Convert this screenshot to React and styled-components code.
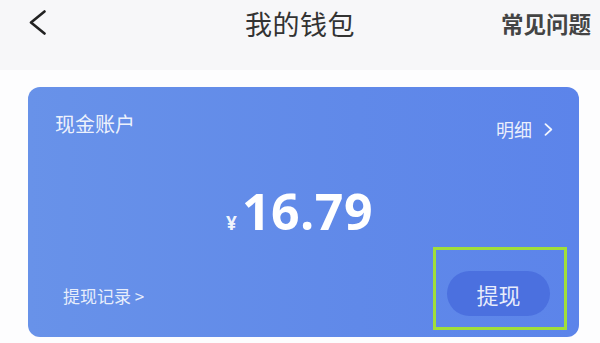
import React from "react";
import styled, { createGlobalStyle } from "styled-components";

const Global = createGlobalStyle`
  html, body { margin: 0; padding: 0; background: #fdfdfe; }
  body { width: 600px; height: 343px; overflow: hidden; font-family: "Noto Sans", "Noto Sans CJK SC", sans-serif; }
  * { box-sizing: border-box; }
`;

const Page = styled.div`
  width: 600px;
  height: 343px;
  display: flex;
  flex-direction: column;
`;

const Header = styled.header`
  height: 70px;
  flex: none;
  background: #f7f7f9;
  display: grid;
  grid-template-columns: 1fr auto 1fr;
  align-items: start;
  padding: 0 9px;
`;

const HeaderCell = styled.div`
  height: 46px;
  display: flex;
  align-items: center;
  justify-content: ${(p) => p.$justify || "flex-start"};
  padding-left: ${(p) => p.$indent || 0}px;
`;

const Title = styled.h1`
  margin: 0;
  font-family: "Noto Sans CJK SC", sans-serif;
  font-size: 27px;
  font-weight: 400;
  color: #333;
  letter-spacing: 0.5px;
`;

const HelpLink = styled.span`
  font-family: "Noto Sans CJK SC", sans-serif;
  font-size: 22.5px;
  font-weight: 700;
  color: #444;
`;

const Card = styled.section`
  flex: none;
  margin: 17px 21px 0 28px;
  height: 250px;
  border-radius: 12px;
  background: linear-gradient(90deg, #6892e9 0%, #6089e9 60%, #5c84ea 100%);
  display: flex;
  flex-direction: column;
  padding: 23px 26px 7px 27px;
  color: #fff;
  overflow: hidden;
`;

const TopRow = styled.div`
  height: 32px;
  display: flex;
  justify-content: space-between;
  align-items: flex-start;
`;

const AccountLabel = styled.span`
  font-family: "Noto Sans CJK SC", sans-serif;
  font-size: 20px;
  line-height: 28px;
  color: rgba(255, 255, 255, 0.9);
`;

const DetailLink = styled.span`
  display: flex;
  align-items: center;
  gap: 12px;
  margin-top: 6px;
  font-family: "Noto Sans CJK SC", sans-serif;
  font-size: 18px;
  line-height: 26px;
  color: rgba(255, 255, 255, 0.88);
`;

const Amount = styled.div`
  margin-top: 39px;
  padding-right: 9px;
  height: 60px;
  display: flex;
  justify-content: center;
  align-items: baseline;
  font-family: "Open Sans", sans-serif;
  font-weight: 700;
  color: #fff;
`;

const Currency = styled.span`
  font-size: 19px;
  line-height: 60px;
  margin-right: 5px;
  color: rgba(255, 255, 255, 0.92);
`;

const Value = styled.span`
  font-size: 50px;
  line-height: 60px;
  letter-spacing: 0.5px;
`;

const BottomRow = styled.div`
  margin-top: auto;
  margin-right: -14px;
  display: flex;
  justify-content: space-between;
  align-items: flex-end;
`;

const RecordLink = styled.span`
  margin-left: 8px;
  margin-bottom: 22px;
  font-family: "Noto Sans CJK SC", sans-serif;
  font-size: 17px;
  line-height: 24px;
  color: rgba(255, 255, 255, 0.85);
`;

const Highlight = styled.div`
  border: 3px solid #a0de3a;
  padding: 21px 14px 11px 11px;
`;

const WithdrawButton = styled.button`
  width: 103px;
  height: 45px;
  border: none;
  border-radius: 23px;
  background: #4b70df;
  color: rgba(255, 255, 255, 0.88);
  font-family: "Noto Sans CJK SC", sans-serif;
  font-size: 22px;
  padding: 0;
  display: flex;
  align-items: center;
  justify-content: center;
`;

export default function App() {
  return (
    <Page>
      <Global />
      <Header>
        <HeaderCell $indent={20}>
          <svg width="18" height="26" viewBox="0 0 18 26">
            <path d="M15.5 1.5 L2 12.5 L15.5 23.5" fill="none" stroke="#222" strokeWidth="2.6" strokeLinecap="round" strokeLinejoin="round" />
          </svg>
        </HeaderCell>
        <HeaderCell $justify="center">
          <Title>我的钱包</Title>
        </HeaderCell>
        <HeaderCell $justify="flex-end">
          <HelpLink>常见问题</HelpLink>
        </HeaderCell>
      </Header>
      <Card>
        <TopRow>
          <AccountLabel>现金账户</AccountLabel>
          <DetailLink>
            明细
            <svg width="9" height="13" viewBox="0 0 9 13">
              <path d="M1.5 1.2 L7.3 6.5 L1.5 11.8" fill="none" stroke="rgba(255,255,255,0.9)" strokeWidth="1.8" strokeLinecap="round" strokeLinejoin="round" />
            </svg>
          </DetailLink>
        </TopRow>
        <Amount>
          <Currency>¥</Currency>
          <Value>16.79</Value>
        </Amount>
        <BottomRow>
          <RecordLink>提现记录 &gt;</RecordLink>
          <Highlight>
            <WithdrawButton>提现</WithdrawButton>
          </Highlight>
        </BottomRow>
      </Card>
    </Page>
  );
}
